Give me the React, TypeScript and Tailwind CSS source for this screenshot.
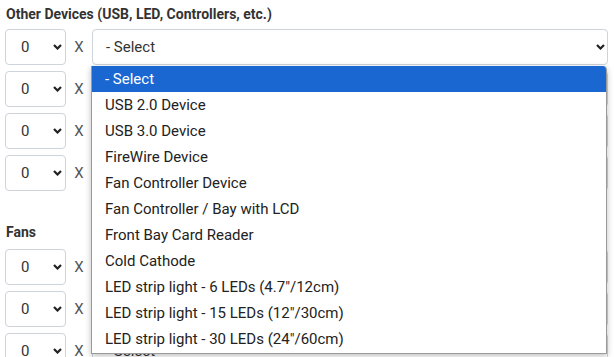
import React from "react";

const options = [
  "- Select",
  "USB 2.0 Device",
  "USB 3.0 Device",
  "FireWire Device",
  "Fan Controller Device",
  "Fan Controller / Bay with LCD",
  "Front Bay Card Reader",
  "Cold Cathode",
  'LED strip light - 6 LEDs (4.7"/12cm)',
  'LED strip light - 15 LEDs (12"/30cm)',
  'LED strip light - 30 LEDs (24"/60cm)',
];

function Chevron() {
  return (
    <svg width="9" height="6" viewBox="0 0 9 6" className="shrink-0">
      <path d="M1 1 L4.5 4.5 L8 1" fill="none" stroke="#222" strokeWidth="2.2" />
    </svg>
  );
}

// covered: the row sits under the open list, so its label is not seen
function Row({ covered = false }: { covered?: boolean }) {
  return (
    <div className="flex items-center h-[36px] mb-[6px]">
      <div className="flex items-center justify-between w-[61px] h-full border border-[#ced4da] rounded-[4px] pl-[15px] pr-[3px] text-[15px] text-[#333]">
        <span>0</span>
        <Chevron />
      </div>
      <span className="w-[26px] text-center text-[15px] text-[#555]">X</span>
      <div className="flex items-center justify-between flex-1 h-full border border-[#ced4da] rounded-[4px] pl-[13px] pr-[2px] text-[15px] text-[#333]">
        <span className={covered ? "invisible" : ""}>- Select</span>
        <Chevron />
      </div>
    </div>
  );
}

export default function App() {
  return (
    <div className="relative w-[614px] h-[357px] overflow-hidden bg-white font-['Roboto',sans-serif]">
      <div className="pl-[5px] pr-[6px] pt-[4px]">
        <h3 className="pl-[1px] h-[20px] leading-[20px] mb-[5px] text-[14px] font-bold text-[#333]">
          Other Devices (USB, LED, Controllers, etc.)
        </h3>
        <Row />
        <Row covered />
        <Row covered />
        <Row covered />
        <h3 className="pl-[1px] mt-[31px] h-[20px] leading-[20px] mb-[7px] text-[14px] font-bold text-[#333]">
          Fans
        </h3>
        <Row covered />
        <Row covered />
        <Row />
      </div>

      <ul className="absolute left-[91px] top-[66px] w-[516px] h-[288px] bg-white border border-[#9a9a9a] border-t-0 rounded-tr-[4px] shadow-[0_2px_6px_rgba(0,0,0,0.25)] overflow-hidden text-[15px] text-[#222]">
        {options.map((o, i) => (
          <li
            key={o}
            className={
              i === 0
                ? "h-[26px] leading-[26px] pl-[13px] bg-[#1a67d2] text-white"
                : "h-[26px] leading-[26px] pl-[13px]"
            }
          >
            {o}
          </li>
        ))}
      </ul>
    </div>
  );
}
